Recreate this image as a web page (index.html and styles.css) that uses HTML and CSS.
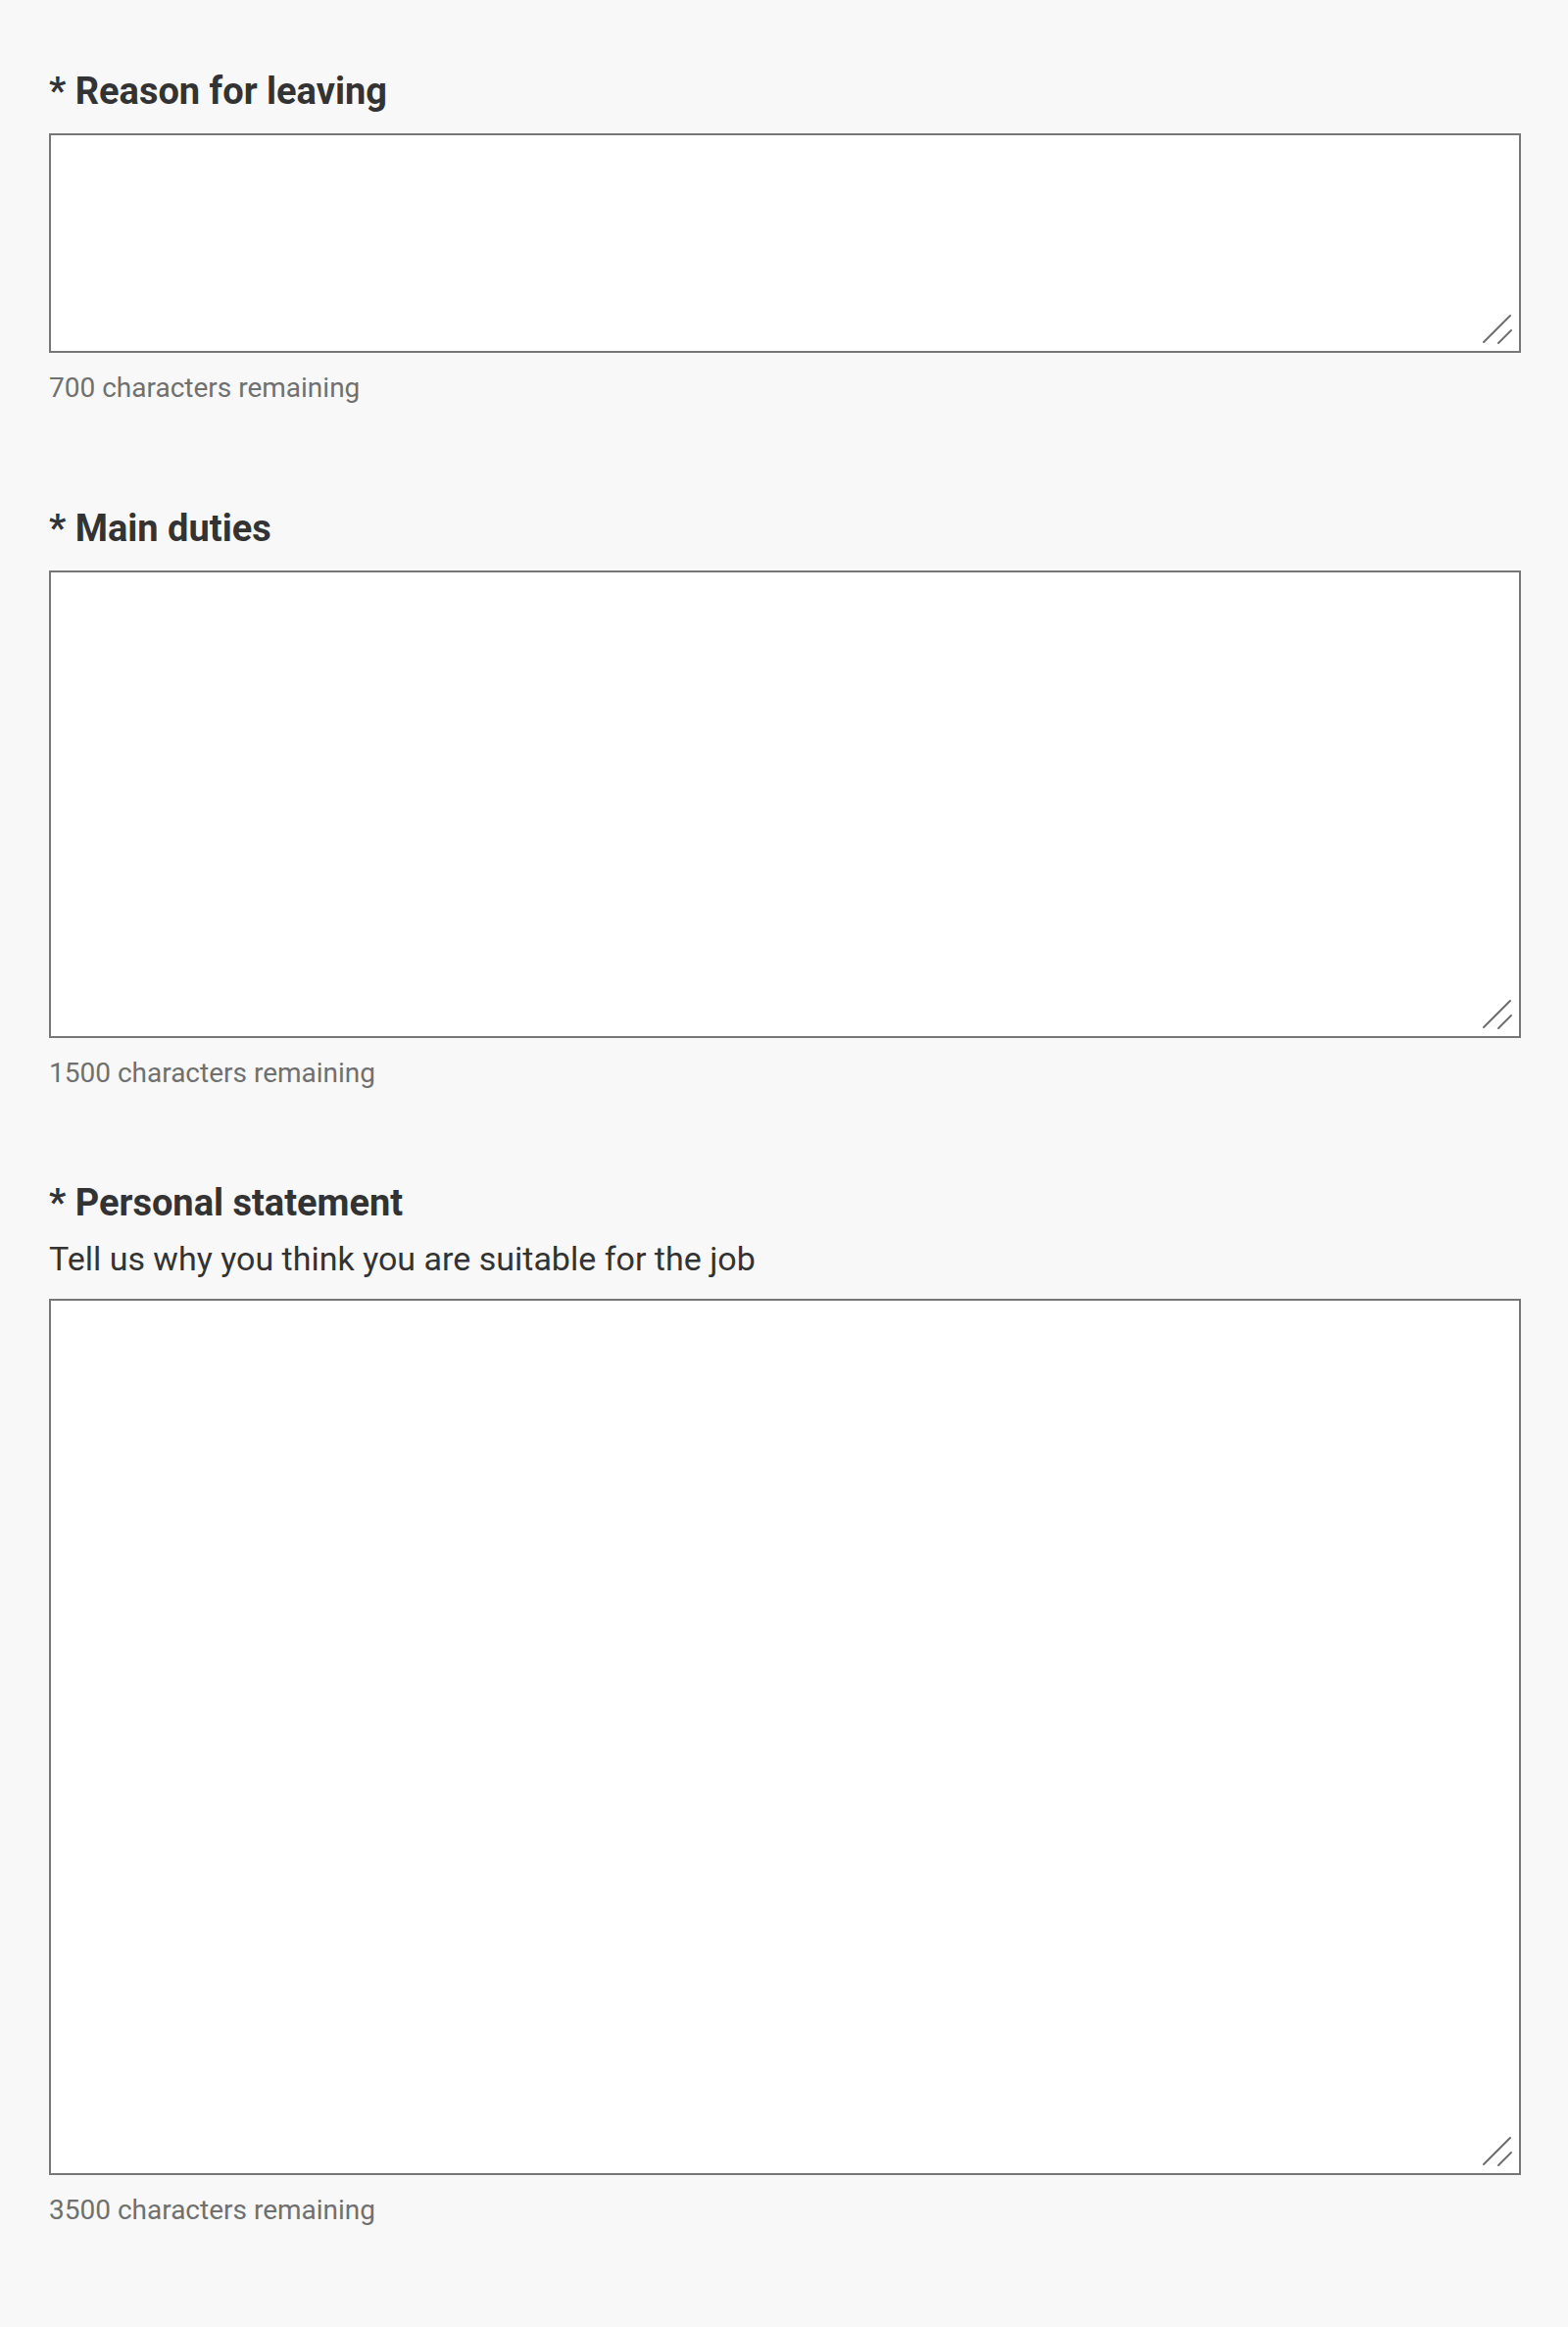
FILE: index.html
```html
<!DOCTYPE html>
<html lang="en">
<head>
  <meta charset="UTF-8">
  <title>Application - Employment history</title>
  <link rel="stylesheet" href="styles.css">
</head>
<body>
  <form class="form">
    <div class="field">
      <label for="reason" class="field-label">* Reason for leaving</label>
      <div class="input-wrap">
        <textarea id="reason" class="field-input short" maxlength="700"></textarea>
        <svg class="resizer" viewBox="0 0 40 40" width="40" height="40">
          <line x1="2" y1="29" x2="29" y2="2" />
          <line x1="17" y1="30" x2="30" y2="17" />
        </svg>
      </div>
      <div class="counter">700 characters remaining</div>
    </div>

    <div class="field gap-small">
      <label for="duties" class="field-label">* Main duties</label>
      <div class="input-wrap">
        <textarea id="duties" class="field-input medium" maxlength="1500"></textarea>
        <svg class="resizer" viewBox="0 0 40 40" width="40" height="40">
          <line x1="2" y1="29" x2="29" y2="2" />
          <line x1="17" y1="30" x2="30" y2="17" />
        </svg>
      </div>
      <div class="counter">1500 characters remaining</div>
    </div>

    <div class="field">
      <label for="statement" class="field-label">* Personal statement</label>
      <div class="field-hint">Tell us why you think you are suitable for the job</div>
      <div class="input-wrap">
        <textarea id="statement" class="field-input tall" maxlength="3500"></textarea>
        <svg class="resizer" viewBox="0 0 40 40" width="40" height="40">
          <line x1="2" y1="29" x2="29" y2="2" />
          <line x1="17" y1="30" x2="30" y2="17" />
        </svg>
      </div>
      <div class="counter">3500 characters remaining</div>
    </div>
  </form>
</body>
</html>
```

FILE: styles.css
```css
html {
  background: #f8f8f8;
}
body {
  margin: 0;
  padding: 70px 48px 100px 50px;
  font-family: Roboto, "Liberation Sans", Arial, sans-serif;
  color: #333333;
}
.field {
  display: flex;
  flex-direction: column;
  margin-bottom: 103px;
}
.field.gap-small {
  margin-bottom: 92px;
}
.field-label {
  font-size: 38px;
  line-height: 46px;
  font-weight: 700;
  color: #333333;
}
.field-hint {
  margin-top: 13px;
  font-size: 34px;
  line-height: 42px;
  color: #333333;
}
.input-wrap {
  position: relative;
  margin-top: 20px;
}
.field-input {
  display: block;
  width: 100%;
  box-sizing: border-box;
  border: 2px solid #777777;
  border-radius: 0;
  background: #ffffff;
  padding: 10px;
  font-family: inherit;
  font-size: 28px;
  resize: none;
  outline: none;
}
.field-input.short {
  height: 224px;
}
.field-input.medium {
  height: 477px;
}
.field-input.tall {
  height: 894px;
}
.resizer {
  position: absolute;
  right: 0;
  bottom: 0;
  stroke: #6e6e6e;
  stroke-width: 2;
  stroke-linecap: round;
}
.counter {
  margin-top: 19px;
  font-size: 28px;
  line-height: 34px;
  color: #707070;
}
```
